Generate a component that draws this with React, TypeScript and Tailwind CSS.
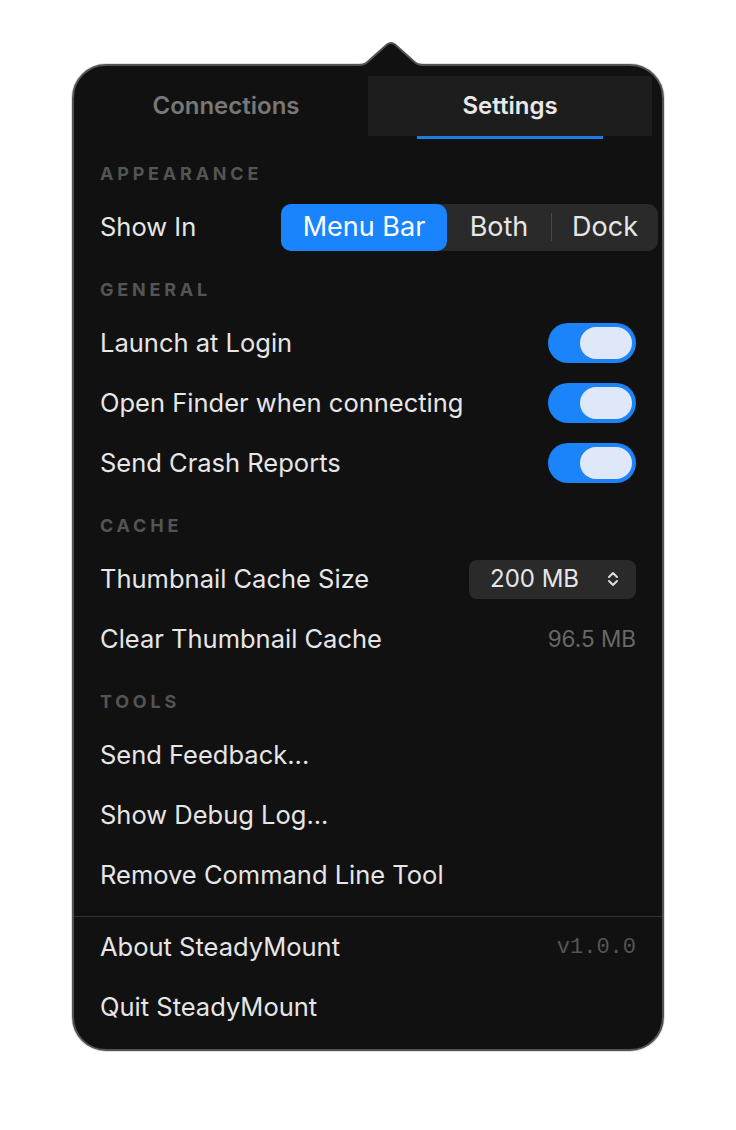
import { useState } from "react";

function SectionHeader({ title }: { title: string }) {
  return (
    <div className="mt-5 flex h-6 items-center text-[18px] font-bold tracking-[0.21em] text-[#545454]">
      {title}
    </div>
  );
}

function Row({ children }: { children: React.ReactNode }) {
  return <div className="flex h-[60px] items-center justify-between">{children}</div>;
}

function Toggle({ on }: { on: boolean }) {
  return (
    <div className="flex h-[40px] w-[88px] items-center justify-end rounded-full bg-[#1c84fb] px-[4px]">
      <div className={on ? "h-[32px] w-[52px] rounded-full bg-[#dfe8f9]" : "h-[32px] w-[52px] rounded-full bg-[#dfe8f9]"} />
    </div>
  );
}

function UpDown() {
  return (
    <svg width="14" height="20" viewBox="0 0 14 20" fill="none" stroke="#dcdcdc" strokeWidth="2" strokeLinecap="round" strokeLinejoin="round">
      <path d="M3 8 L7 4 L11 8" />
      <path d="M3 12 L7 16 L11 12" />
    </svg>
  );
}

export default function App() {
  const [tab, setTab] = useState("settings");
  const [showIn, setShowIn] = useState("menubar");

  return (
    <div className="min-h-[1130px] bg-white pl-[72px] pt-[64px] font-[Inter,sans-serif]">
      <div className="relative w-[592px] rounded-[34px] border-2 border-[#535353] bg-[#111111] shadow-[0_0_0_1px_rgba(0,0,0,0.12)]">
        {/* popover arrow */}
        <svg className="absolute left-[285px] top-[-25px]" width="64" height="28" viewBox="0 0 64 28">
          <path
            d="M0 24 C4 24 6 23.5 9 20.5 L28 3.5 Q32 0.5 36 3.5 L55 20.5 C58 23.5 60 24 64 24 L64 28 L0 28 Z"
            fill="#111111"
          />
          <path
            d="M0 24 C4 24 6 23.5 9 20.5 L28 3.5 Q32 0.5 36 3.5 L55 20.5 C58 23.5 60 24 64 24"
            fill="none"
            stroke="#535353"
            strokeWidth="2"
          />
        </svg>

        {/* tabs */}
        <div className="mt-[10px] flex px-[10px]">
          <button onClick={() => setTab("connections")} className="flex flex-1 flex-col items-center">
            <div className={`flex h-[60px] w-full items-center justify-center text-[24px] font-semibold ${tab === "connections" ? "bg-[#1d1d1d] text-[#e8e8e8]" : "text-[#777777]"}`}>
              Connections
            </div>
            <div className={`h-[3px] w-[186px] ${tab === "connections" ? "bg-[#1b7ee9]" : ""}`} />
          </button>
          <button onClick={() => setTab("settings")} className="flex flex-1 flex-col items-center">
            <div className={`flex h-[60px] w-full items-center justify-center text-[24px] font-semibold ${tab === "settings" ? "bg-[#1d1d1d] text-[#e8e8e8]" : "text-[#777777]"}`}>
              Settings
            </div>
            <div className={`h-[3px] w-[186px] ${tab === "settings" ? "bg-[#1b7ee9]" : ""}`} />
          </button>
        </div>

        <div className="px-[26px] text-[25.5px] text-[#e6e6e6]">
          <div className="h-[2px]" />
          <SectionHeader title="APPEARANCE" />
          <div className="mt-3">
            <Row>
              <span>Show In</span>
              <div className="-mr-[22px] flex h-[47px] items-center rounded-[10px] bg-[#2a2a2a] text-[27px]">
                <button
                  onClick={() => setShowIn("menubar")}
                  className={`flex h-full w-[166px] items-center justify-center rounded-[10px] ${showIn === "menubar" ? "bg-[#1a84ff] text-white" : ""}`}
                >
                  Menu Bar
                </button>
                <button
                  onClick={() => setShowIn("both")}
                  className={`flex h-full w-[104px] items-center justify-center rounded-[10px] ${showIn === "both" ? "bg-[#1a84ff] text-white" : ""}`}
                >
                  Both
                </button>
                <div className="h-[28px] w-px bg-[#4a4a4a]" />
                <button
                  onClick={() => setShowIn("dock")}
                  className={`flex h-full w-[106px] items-center justify-center rounded-[10px] ${showIn === "dock" ? "bg-[#1a84ff] text-white" : ""}`}
                >
                  Dock
                </button>
              </div>
            </Row>
          </div>

          <SectionHeader title="GENERAL" />
          <div className="mt-3">
            <Row>
              <span>Launch at Login</span>
              <Toggle on />
            </Row>
            <Row>
              <span>Open Finder when connecting</span>
              <Toggle on />
            </Row>
            <Row>
              <span>Send Crash Reports</span>
              <Toggle on />
            </Row>
          </div>

          <SectionHeader title="CACHE" />
          <div className="mt-3">
            <Row>
              <span>Thumbnail Cache Size</span>
              <div className="flex h-[39px] w-[167px] items-center justify-between rounded-[8px] bg-[#2a2a2a] pl-[21px] pr-[16px] text-[24px]">
                <span>200 MB</span>
                <UpDown />
              </div>
            </Row>
            <Row>
              <span>Clear Thumbnail Cache</span>
              <span className="text-[22.5px] text-[#686868]">96.5 MB</span>
            </Row>
          </div>

          <SectionHeader title="TOOLS" />
          <div className="mt-3">
            <Row>
              <span>Send Feedback...</span>
            </Row>
            <Row>
              <span>Show Debug Log...</span>
            </Row>
            <Row>
              <span>Remove Command Line Tool</span>
            </Row>
          </div>
        </div>

        <div className="mt-[11px] h-px bg-[#333333]" />

        <div className="px-[26px] pb-[12px] text-[25.5px] text-[#e6e6e6]">
          <Row>
            <span>About SteadyMount</span>
            <span className="font-['Liberation_Mono',monospace] text-[22px] text-[#555555]">v1.0.0</span>
          </Row>
          <Row>
            <span>Quit SteadyMount</span>
          </Row>
        </div>
      </div>
    </div>
  );
}
